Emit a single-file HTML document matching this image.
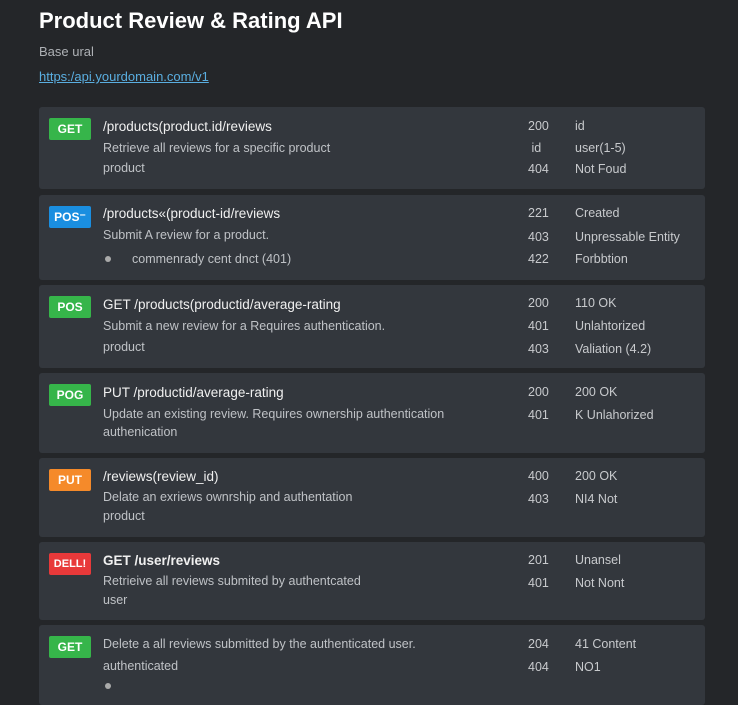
<!DOCTYPE html>
<html><head><meta charset="utf-8"><style>
body{margin:0;width:738px;height:695px;background:#242629;font-family:"Liberation Sans",sans-serif;position:relative;overflow:hidden}
.a{position:absolute;white-space:nowrap}
h1{position:absolute;left:39px;top:8px;margin:0;font-size:22px;color:#fff;font-weight:bold}
.card{position:absolute;left:39px;width:666px;background:#33373d;border-radius:3px}
.b{position:absolute;left:10px;top:11px;width:42px;height:22px;border-radius:2px;color:#fff;font-size:12px;font-weight:bold;text-align:center;line-height:22px}
.t{position:absolute;left:64px;font-size:13.5px;color:#f0f0f0;white-space:nowrap}
.d{position:absolute;left:64px;font-size:12.5px;color:#bfc2c6;white-space:nowrap}
.c{position:absolute;left:489px;font-size:12.5px;color:#c8cacd;white-space:nowrap}
.s{position:absolute;left:536px;font-size:12.5px;color:#c8cacd;white-space:nowrap}
.g{background:#36b54a}.bl{background:#1a8ee0}.o{background:#f58a2a}.r{background:#e8393a}
.dot{position:absolute;width:6px;height:6px;border-radius:50%;background:#aaa}
</style></head><body>
<h1>Product Review &amp; Rating API</h1>
<div class="a" style="left:39px;top:44px;font-size:13px;color:#aeb1b5">Base ural</div>
<div class="a" style="left:39px;top:69px;font-size:13px;color:#5aaee0;text-decoration:underline">https:/api.yourdomain.com/v1</div>

<div class="card" style="top:107px;height:82px">
<div class="b g">GET</div>
<div class="t" style="top:12px">/products(product.id/reviews</div>
<div class="d" style="top:34px">Retrieve all reviews for a specific product</div>
<div class="d" style="top:54px">product</div>
<div class="c" style="top:12px">200</div><div class="s" style="top:12px">id</div>
<div class="c" style="top:34px">&nbsp;id</div><div class="s" style="top:34px">user(1-5)</div>
<div class="c" style="top:55px">404</div><div class="s" style="top:55px">Not Foud</div>
</div>

<div class="card" style="top:195px;height:85px">
<div class="b bl">POS⁻</div>
<div class="t" style="top:11px">/products«(product-id/reviews</div>
<div class="d" style="top:33px">Submit A review for a product.</div>
<div class="dot" style="left:66px;top:61px"></div>
<div class="d" style="left:93px;top:57px">commenrady cent dnct (401)</div>
<div class="c" style="top:11px">221</div><div class="s" style="top:11px">Created</div>
<div class="c" style="top:35px">403</div><div class="s" style="top:35px">Unpressable Entity</div>
<div class="c" style="top:57px">422</div><div class="s" style="top:57px">Forbbtion</div>
</div>

<div class="card" style="top:285px;height:83px">
<div class="b g">POS</div>
<div class="t" style="top:12px">GET /products(productid/average-rating</div>
<div class="d" style="top:34px">Submit a new review for a Requires authentication.</div>
<div class="d" style="top:55px">product</div>
<div class="c" style="top:11px">200</div><div class="s" style="top:11px">110 OK</div>
<div class="c" style="top:34px">401</div><div class="s" style="top:34px">Unlahtorized</div>
<div class="c" style="top:57px">403</div><div class="s" style="top:57px">Valiation (4.2)</div>
</div>

<div class="card" style="top:373px;height:80px">
<div class="b g">POG</div>
<div class="t" style="top:12px">PUT /productid/average-rating</div>
<div class="d" style="top:34px">Update an existing review. Requires ownership authentication</div>
<div class="d" style="top:52px">authenication</div>
<div class="c" style="top:12px">200</div><div class="s" style="top:12px">200 OK</div>
<div class="c" style="top:35px">401</div><div class="s" style="top:35px">K Unlahorized</div>
</div>

<div class="card" style="top:458px;height:79px">
<div class="b o">PUT</div>
<div class="t" style="top:11px">/reviews(review_id)</div>
<div class="d" style="top:32px">Delate an exriews ownrship and authentation</div>
<div class="d" style="top:51px">product</div>
<div class="c" style="top:11px">400</div><div class="s" style="top:11px">200 OK</div>
<div class="c" style="top:34px">403</div><div class="s" style="top:34px">NI4 Not</div>
</div>

<div class="card" style="top:542px;height:78px">
<div class="b r" style="font-size:11px">DELL!</div>
<div class="t" style="top:11px;font-weight:bold">GET /user/reviews</div>
<div class="d" style="top:32px">Retrieive all reviews submited by authentcated</div>
<div class="d" style="top:51px">user</div>
<div class="c" style="top:11px">201</div><div class="s" style="top:11px">Unansel</div>
<div class="c" style="top:34px">401</div><div class="s" style="top:34px">Not Nont</div>
</div>

<div class="card" style="top:625px;height:80px">
<div class="b g">GET</div>
<div class="d" style="top:12px">Delete a all reviews submitted by the authenticated user.</div>
<div class="d" style="top:34px">authenticated</div>
<div class="dot" style="left:66px;top:58px"></div>
<div class="c" style="top:12px">204</div><div class="s" style="top:12px">41 Content</div>
<div class="c" style="top:35px">404</div><div class="s" style="top:35px">NO1</div>
</div>
</body></html>
